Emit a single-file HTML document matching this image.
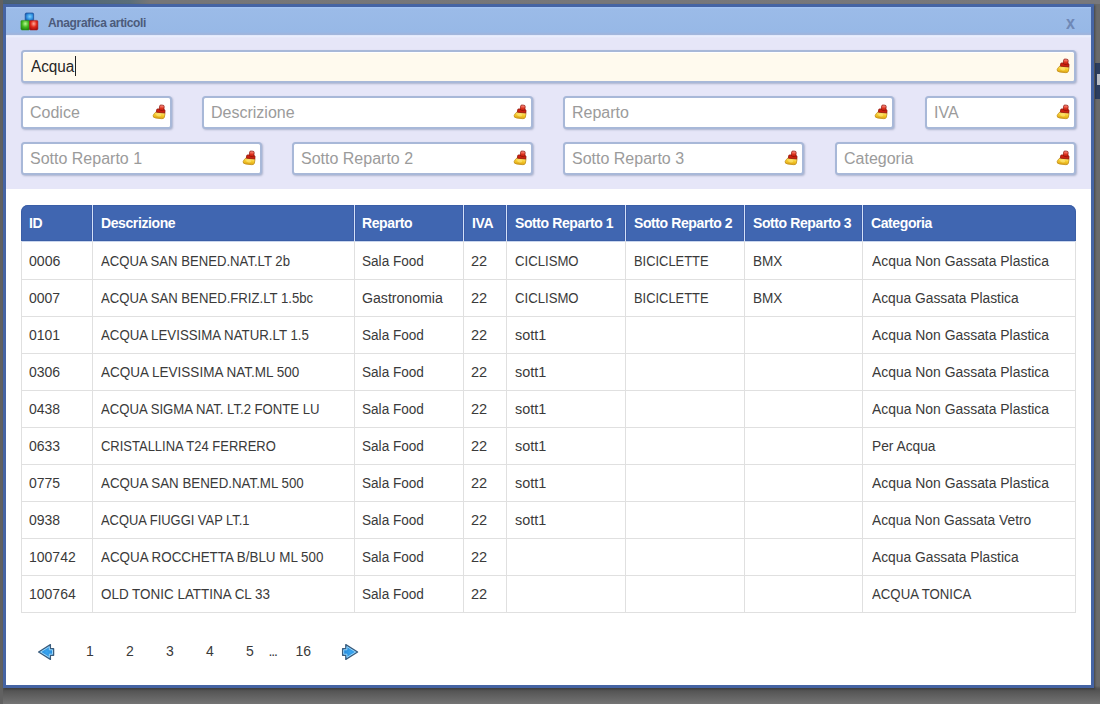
<!DOCTYPE html>
<html><head><meta charset="utf-8">
<style>
*{box-sizing:border-box;margin:0;padding:0}
html,body{width:1100px;height:704px;overflow:hidden}
body{position:relative;background:linear-gradient(#6a6a6a 0,#6a6a6a 686px,#505050 689px,#747474 704px);font-family:"Liberation Sans",sans-serif;}
.bgtop{position:absolute;left:0;top:0;width:1100px;height:4px;background:linear-gradient(90deg,#4a6070 0,#5a6e7a 130px,#767678 150px,#78787c 1100px)}
.bgr{position:absolute;left:1095px;top:63px;width:5px;height:36px;background:#2c3d5e}
.bgr2{position:absolute;left:1097px;top:74px;width:3px;height:11px;background:#b8bcc4}
.bgl{position:absolute;left:0;top:0;width:3px;height:704px;background:#616161}
.dlg{position:absolute;left:3px;top:4px;width:1091px;height:684px;background:#4564a4;box-shadow:1px 1px 2px rgba(0,0,0,.35)}
.title{position:absolute;left:6px;top:7px;width:1085px;height:28px;background:linear-gradient(#a6c6f6 0,#9bbbe8 2px,#97b8e6 25px,#9fb4dc 27px,#a4b8dc 28px)}
.tline{position:absolute;left:6px;top:35px;width:1085px;height:3px;background:linear-gradient(#dfe6fa,#eaeefd 50%,#e6e6f8)}
.form{position:absolute;left:6px;top:38px;width:1085px;height:151px;background:#e6e6f8}
.white{position:absolute;left:6px;top:189px;width:1085px;height:496px;background:#fff}
.ttl{position:absolute;left:48px;top:16px;font-weight:bold;font-size:12px;color:#4c5b7b;letter-spacing:-0.35px;line-height:14px}
.close{position:absolute;left:1066px;top:13px;font-weight:bold;font-size:19px;color:#6f88b6;line-height:19px;transform:scaleX(.85);transform-origin:0 0}
.inp{position:absolute;height:33px;background:#fff;border:2px solid #a8b8d8;border-radius:3.5px;box-shadow:1px 1px 2px rgba(70,90,130,.35),inset 0 1px 0 #fff;}
.inp span{position:absolute;left:7px;top:6px;transform-origin:0 0;font-size:16px;line-height:18px;color:#9b9b9b;white-space:nowrap}
.br{position:absolute}
.th{position:absolute;left:21px;top:205px;width:1055px;height:36px;background:#4066b1;border-radius:7px 7px 0 0;box-shadow:inset 0 0 0 1px #3a5ea6}
.hsep{position:absolute;top:205px;width:1px;height:36px;background:#d2e0f8;box-shadow:-1px 0 0 #3a5ca8,1px 0 0 #3a5ca8}
.hc{position:absolute;top:205px;height:36px;line-height:37px;font-size:14px;font-weight:bold;color:#fff;letter-spacing:-0.4px;white-space:nowrap}
.vl{position:absolute;top:241px;width:1px;height:372px;background:#e0e0e0}
.hl{position:absolute;left:21px;width:1055px;height:1px;background:#e0e0e0}
.hl0{position:absolute;left:21px;top:241px;width:1055px;height:1px;background:#c9d6ee}
.c{position:absolute;height:37px;line-height:41px;font-size:14px;color:#3a3a3a;white-space:nowrap;transform-origin:0 0}
.pg{position:absolute;top:642px;font-size:14px;color:#3a3a3a;line-height:18px}
</style></head><body>
<svg width="0" height="0" style="position:absolute">
<defs>
<linearGradient id="gy" x1="0" y1="0" x2="0" y2="1"><stop offset="0" stop-color="#ffe98a"/><stop offset=".5" stop-color="#f6cc2a"/><stop offset="1" stop-color="#dca318"/></linearGradient>
<linearGradient id="gr" x1="0" y1="0" x2="0" y2="1"><stop offset="0" stop-color="#ff9a90"/><stop offset=".6" stop-color="#e0321e"/><stop offset="1" stop-color="#b81a0c"/></linearGradient>
<symbol id="broom" viewBox="0 0 14 16">
<g transform="rotate(6 8.5 8)">
<path d="M4.3 8.2 L12.6 8.2 Q13.1 8.4 13.1 9.4 L12.9 12.8 Q12.6 14.5 10.4 14.5 L4.4 14.5 Q1.2 14.3 1.6 12.2 Q2.2 9.9 4.3 8.2 Z" fill="url(#gy)" stroke="#c49018" stroke-width=".8"/>
<ellipse cx="7" cy="11.3" rx="2.6" ry="1.4" fill="#ffe98a" opacity=".55"/>
<path d="M5.4 5.2 L11.9 5.2 Q12.9 5.3 12.9 6.4 L12.9 8.6 L4.4 8.6 L4.4 6.4 Q4.4 5.2 5.4 5.2 Z" fill="#cc2010" stroke="#8e140a" stroke-width=".7"/>
<rect x="7.0" y="1.0" width="4.6" height="5.4" rx="1.3" fill="url(#gr)" stroke="#8e140a" stroke-width=".7"/>
</g>
</symbol>
</defs></svg>
<div class="bgtop"></div>
<div class="bgl"></div>
<div class="bgr"></div>
<div class="bgr2"></div>
<div class="dlg"></div>
<div class="title"></div>
<div class="tline"></div>
<div class="form"></div>
<div class="white"></div>
<svg style="position:absolute;left:20px;top:12px" width="20" height="20" viewBox="0 0 20 20">
<defs>
<radialGradient id="cb" cx=".55" cy=".45" r=".6"><stop offset="0" stop-color="#7cd0ff"/><stop offset=".6" stop-color="#3090e0"/><stop offset="1" stop-color="#1a5cb0"/></radialGradient>
<radialGradient id="cg" cx=".5" cy=".35" r=".65"><stop offset="0" stop-color="#b8f890"/><stop offset=".55" stop-color="#44b820"/><stop offset="1" stop-color="#238a10"/></radialGradient>
<radialGradient id="cr" cx=".5" cy=".35" r=".65"><stop offset="0" stop-color="#ffa898"/><stop offset=".55" stop-color="#e02818"/><stop offset="1" stop-color="#a81010"/></radialGradient>
</defs>
<rect x="5.2" y="1" width="8.4" height="8" rx="1.2" fill="url(#cb)" stroke="#1d4f96" stroke-width=".7"/>
<rect x="0.9" y="8.4" width="8.8" height="9.6" rx="1.2" fill="url(#cg)" stroke="#2e8a18" stroke-width=".5"/>
<rect x="9.5" y="8.4" width="8.4" height="9.6" rx="1.2" fill="url(#cr)" stroke="#a01818" stroke-width=".5"/>
</svg>
<div class="ttl">Anagrafica articoli</div>
<div class="close">x</div>

<div class="inp" style="left:21px;top:50px;width:1055px;background:#fffaee"><span style="color:#262626;left:8px;top:5.5px;transform:scaleX(.955)">Acqua</span></div>
<div style="position:absolute;left:75px;top:56px;width:1px;height:20px;background:#222"></div>
<svg class="br" style="left:1056px;top:58px" width="14" height="16" viewBox="0 0 14 16">
<use href="#broom"/></svg>
<div class="inp" style="left:21px;top:96px;width:151px"><span>Codice</span></div>
<svg class="br" style="left:152px;top:104px" width="14" height="16" viewBox="0 0 14 16">
<use href="#broom"/></svg>
<div class="inp" style="left:202px;top:96px;width:331px"><span>Descrizione</span></div>
<svg class="br" style="left:513px;top:104px" width="14" height="16" viewBox="0 0 14 16">
<use href="#broom"/></svg>
<div class="inp" style="left:563px;top:96px;width:331px"><span>Reparto</span></div>
<svg class="br" style="left:874px;top:104px" width="14" height="16" viewBox="0 0 14 16">
<use href="#broom"/></svg>
<div class="inp" style="left:925px;top:96px;width:151px"><span>IVA</span></div>
<svg class="br" style="left:1056px;top:104px" width="14" height="16" viewBox="0 0 14 16">
<use href="#broom"/></svg>
<div class="inp" style="left:21px;top:142px;width:241px"><span>Sotto Reparto 1</span></div>
<svg class="br" style="left:242px;top:150px" width="14" height="16" viewBox="0 0 14 16">
<use href="#broom"/></svg>
<div class="inp" style="left:292px;top:142px;width:241px"><span>Sotto Reparto 2</span></div>
<svg class="br" style="left:513px;top:150px" width="14" height="16" viewBox="0 0 14 16">
<use href="#broom"/></svg>
<div class="inp" style="left:563px;top:142px;width:241px"><span>Sotto Reparto 3</span></div>
<svg class="br" style="left:784px;top:150px" width="14" height="16" viewBox="0 0 14 16">
<use href="#broom"/></svg>
<div class="inp" style="left:835px;top:142px;width:241px"><span>Categoria</span></div>
<svg class="br" style="left:1056px;top:150px" width="14" height="16" viewBox="0 0 14 16">
<use href="#broom"/></svg>
<div class="th"></div>
<div class="hsep" style="left:92px"></div>
<div class="hsep" style="left:354px"></div>
<div class="hsep" style="left:463px"></div>
<div class="hsep" style="left:506px"></div>
<div class="hsep" style="left:625px"></div>
<div class="hsep" style="left:744px"></div>
<div class="hsep" style="left:862px"></div>
<div class="hc" style="left:29px">ID</div>
<div class="hc" style="left:101px">Descrizione</div>
<div class="hc" style="left:362px">Reparto</div>
<div class="hc" style="left:472px">IVA</div>
<div class="hc" style="left:515px">Sotto Reparto 1</div>
<div class="hc" style="left:634px">Sotto Reparto 2</div>
<div class="hc" style="left:753px">Sotto Reparto 3</div>
<div class="hc" style="left:871px">Categoria</div>
<div class="hl0"></div>
<div class="vl" style="left:21px"></div>
<div class="vl" style="left:92px"></div>
<div class="vl" style="left:354px"></div>
<div class="vl" style="left:463px"></div>
<div class="vl" style="left:506px"></div>
<div class="vl" style="left:625px"></div>
<div class="vl" style="left:744px"></div>
<div class="vl" style="left:862px"></div>
<div class="vl" style="left:1075px"></div>
<div class="hl" style="top:279px"></div>
<div class="hl" style="top:316px"></div>
<div class="hl" style="top:353px"></div>
<div class="hl" style="top:390px"></div>
<div class="hl" style="top:427px"></div>
<div class="hl" style="top:464px"></div>
<div class="hl" style="top:501px"></div>
<div class="hl" style="top:538px"></div>
<div class="hl" style="top:575px"></div>
<div class="hl" style="top:612px"></div>
<div class="c" style="left:29px;top:241px;transform:scaleX(1.0088)">0006</div>
<div class="c" style="left:101px;top:241px;transform:scaleX(0.9377)">ACQUA SAN BENED.NAT.LT 2b</div>
<div class="c" style="left:362px;top:241px;transform:scaleX(0.9703)">Sala Food</div>
<div class="c" style="left:471px;top:241px;transform:scaleX(1.0410)">22</div>
<div class="c" style="left:515px;top:241px;transform:scaleX(0.9398)">CICLISMO</div>
<div class="c" style="left:634px;top:241px;transform:scaleX(0.9221)">BICICLETTE</div>
<div class="c" style="left:753px;top:241px;transform:scaleX(0.9695)">BMX</div>
<div class="c" style="left:872px;top:241px;transform:scaleX(0.9934)">Acqua Non Gassata Plastica</div>
<div class="c" style="left:29px;top:278px;transform:scaleX(1.0002)">0007</div>
<div class="c" style="left:101px;top:278px;transform:scaleX(0.9389)">ACQUA SAN BENED.FRIZ.LT 1.5bc</div>
<div class="c" style="left:362px;top:278px;transform:scaleX(1.0086)">Gastronomia</div>
<div class="c" style="left:471px;top:278px;transform:scaleX(1.0410)">22</div>
<div class="c" style="left:515px;top:278px;transform:scaleX(0.9398)">CICLISMO</div>
<div class="c" style="left:634px;top:278px;transform:scaleX(0.9221)">BICICLETTE</div>
<div class="c" style="left:753px;top:278px;transform:scaleX(0.9695)">BMX</div>
<div class="c" style="left:872px;top:278px;transform:scaleX(0.9861)">Acqua Gassata Plastica</div>
<div class="c" style="left:29px;top:315px;transform:scaleX(1.0002)">0101</div>
<div class="c" style="left:101px;top:315px;transform:scaleX(0.9474)">ACQUA LEVISSIMA NATUR.LT 1.5</div>
<div class="c" style="left:362px;top:315px;transform:scaleX(0.9703)">Sala Food</div>
<div class="c" style="left:471px;top:315px;transform:scaleX(1.0410)">22</div>
<div class="c" style="left:515px;top:315px;transform:scaleX(1.0282)">sott1</div>
<div class="c" style="left:872px;top:315px;transform:scaleX(0.9934)">Acqua Non Gassata Plastica</div>
<div class="c" style="left:29px;top:352px;transform:scaleX(1.0002)">0306</div>
<div class="c" style="left:101px;top:352px;transform:scaleX(0.9652)">ACQUA LEVISSIMA NAT.ML 500</div>
<div class="c" style="left:362px;top:352px;transform:scaleX(0.9703)">Sala Food</div>
<div class="c" style="left:471px;top:352px;transform:scaleX(1.0410)">22</div>
<div class="c" style="left:515px;top:352px;transform:scaleX(1.0282)">sott1</div>
<div class="c" style="left:872px;top:352px;transform:scaleX(0.9934)">Acqua Non Gassata Plastica</div>
<div class="c" style="left:29px;top:389px;transform:scaleX(1.0002)">0438</div>
<div class="c" style="left:101px;top:389px;transform:scaleX(0.9386)">ACQUA SIGMA NAT. LT.2 FONTE LU</div>
<div class="c" style="left:362px;top:389px;transform:scaleX(0.9703)">Sala Food</div>
<div class="c" style="left:471px;top:389px;transform:scaleX(1.0410)">22</div>
<div class="c" style="left:515px;top:389px;transform:scaleX(1.0282)">sott1</div>
<div class="c" style="left:872px;top:389px;transform:scaleX(0.9934)">Acqua Non Gassata Plastica</div>
<div class="c" style="left:29px;top:426px;transform:scaleX(1.0002)">0633</div>
<div class="c" style="left:101px;top:426px;transform:scaleX(0.9271)">CRISTALLINA T24 FERRERO</div>
<div class="c" style="left:362px;top:426px;transform:scaleX(0.9703)">Sala Food</div>
<div class="c" style="left:471px;top:426px;transform:scaleX(1.0410)">22</div>
<div class="c" style="left:515px;top:426px;transform:scaleX(1.0282)">sott1</div>
<div class="c" style="left:872px;top:426px;transform:scaleX(0.9828)">Per Acqua</div>
<div class="c" style="left:29px;top:463px;transform:scaleX(1.0002)">0775</div>
<div class="c" style="left:101px;top:463px;transform:scaleX(0.9511)">ACQUA SAN BENED.NAT.ML 500</div>
<div class="c" style="left:362px;top:463px;transform:scaleX(0.9703)">Sala Food</div>
<div class="c" style="left:471px;top:463px;transform:scaleX(1.0410)">22</div>
<div class="c" style="left:515px;top:463px;transform:scaleX(1.0282)">sott1</div>
<div class="c" style="left:872px;top:463px;transform:scaleX(0.9934)">Acqua Non Gassata Plastica</div>
<div class="c" style="left:29px;top:500px;transform:scaleX(1.0002)">0938</div>
<div class="c" style="left:101px;top:500px;transform:scaleX(0.9224)">ACQUA FIUGGI VAP LT.1</div>
<div class="c" style="left:362px;top:500px;transform:scaleX(0.9703)">Sala Food</div>
<div class="c" style="left:471px;top:500px;transform:scaleX(1.0410)">22</div>
<div class="c" style="left:515px;top:500px;transform:scaleX(1.0282)">sott1</div>
<div class="c" style="left:872px;top:500px;transform:scaleX(0.9835)">Acqua Non Gassata Vetro</div>
<div class="c" style="left:29px;top:537px;transform:scaleX(1.0002)">100742</div>
<div class="c" style="left:101px;top:537px;transform:scaleX(0.9560)">ACQUA ROCCHETTA B/BLU ML 500</div>
<div class="c" style="left:362px;top:537px;transform:scaleX(0.9703)">Sala Food</div>
<div class="c" style="left:471px;top:537px;transform:scaleX(1.0410)">22</div>
<div class="c" style="left:872px;top:537px;transform:scaleX(0.9861)">Acqua Gassata Plastica</div>
<div class="c" style="left:29px;top:574px;transform:scaleX(1.0002)">100764</div>
<div class="c" style="left:101px;top:574px;transform:scaleX(0.9597)">OLD TONIC LATTINA CL 33</div>
<div class="c" style="left:362px;top:574px;transform:scaleX(0.9703)">Sala Food</div>
<div class="c" style="left:471px;top:574px;transform:scaleX(1.0410)">22</div>
<div class="c" style="left:872px;top:574px;transform:scaleX(0.9439)">ACQUA TONICA</div>

<svg style="position:absolute;left:34px;top:640px" width="24" height="24" viewBox="34 640 24 24">
<defs><radialGradient id="ag" cx=".55" cy=".5" r=".6"><stop offset="0" stop-color="#3aa6f0"/><stop offset="1" stop-color="#1f7fd0"/></radialGradient></defs>
<path d="M38.6 652 L50.4 644.6 L50.4 648.7 L53.6 648.7 L53.6 655.3 L50.4 655.3 L50.4 659.4 Z" fill="url(#ag)" stroke="#3b5c7c" stroke-width="1.3" stroke-linejoin="round"/>
<path d="M40.6 652 L49.3 646.6 L49.3 649.8 L52.5 649.8 L52.5 654.2 L49.3 654.2 L49.3 657.4 Z" fill="none" stroke="#a6dcfa" stroke-width=".9" stroke-linejoin="round"/>
</svg>
<svg style="position:absolute;left:338px;top:640px" width="24" height="24" viewBox="338 640 24 24">
<path d="M357.6 652 L345.8 644.6 L345.8 648.7 L342.6 648.7 L342.6 655.3 L345.8 655.3 L345.8 659.4 Z" fill="url(#ag)" stroke="#3b5c7c" stroke-width="1.3" stroke-linejoin="round"/>
<path d="M355.6 652 L346.9 646.6 L346.9 649.8 L343.7 649.8 L343.7 654.2 L346.9 654.2 L346.9 657.4 Z" fill="none" stroke="#a6dcfa" stroke-width=".9" stroke-linejoin="round"/>
</svg>
<div class="pg" style="left:86px">1</div>
<div class="pg" style="left:126px">2</div>
<div class="pg" style="left:166px">3</div>
<div class="pg" style="left:206px">4</div>
<div class="pg" style="left:246px">5</div>
<div class="pg" style="left:268.5px;letter-spacing:-1.1px">...</div>
<div class="pg" style="left:295.5px">16</div>
</body></html>
